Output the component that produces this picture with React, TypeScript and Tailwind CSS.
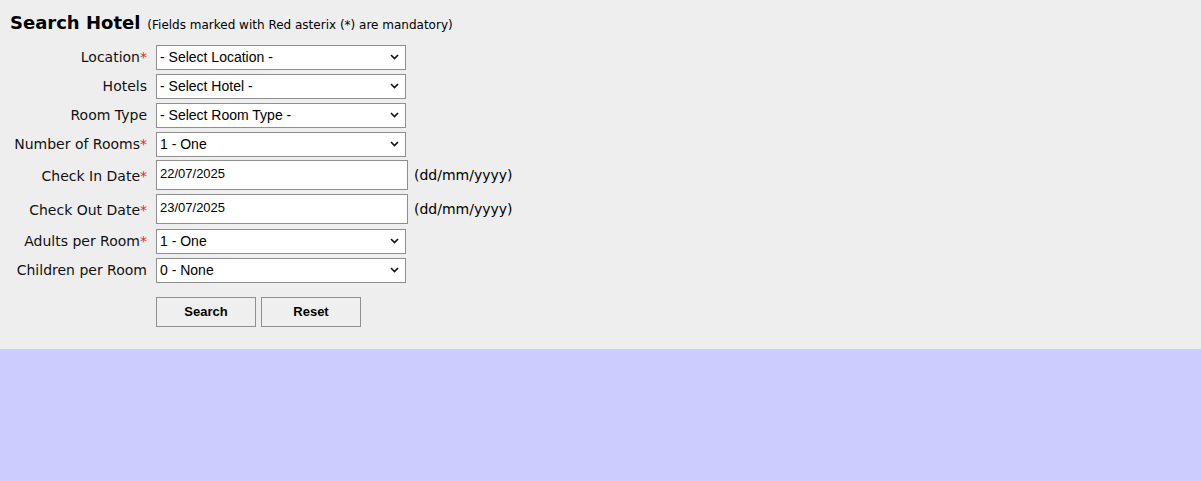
import React from "react";

const labelFont = { fontFamily: '"DejaVu Sans", Verdana, sans-serif' };

function Chevron() {
  return (
    <svg
      className="pointer-events-none absolute right-[7px] top-1/2 -translate-y-1/2"
      width="9"
      height="6"
      viewBox="0 0 9 6"
    >
      <path d="M1 1l3.5 3.5L8 1" fill="none" stroke="#111" strokeWidth="1.6" />
    </svg>
  );
}

function Select({ value }: { value: string }) {
  return (
    <div className="relative w-[250px]">
      <select
        defaultValue={value}
        className="h-[25px] w-full appearance-none border border-[#8f8f8f] bg-white pl-[3px] text-[14px] text-black outline-none font-['Liberation_Sans',Arial,sans-serif]"
      >
        <option>{value}</option>
      </select>
      <Chevron />
    </div>
  );
}

function DateInput({ value }: { value: string }) {
  return (
    <div className="flex items-center gap-[6px]">
      <input
        defaultValue={value}
        className="h-[30px] w-[252px] border border-[#8f8f8f] bg-white px-[3px] pb-[3px] text-[13px] text-black outline-none font-['Liberation_Sans',Arial,sans-serif]"
      />
      <span className="text-[14px] text-black" style={labelFont}>
        (dd/mm/yyyy)
      </span>
    </div>
  );
}

function Row({
  label,
  req,
  children,
  h,
}: {
  label: string;
  req?: boolean;
  children: React.ReactNode;
  h: string;
}) {
  return (
    <div className={`flex items-center ${h}`}>
      <div
        className="w-[150px] pr-[3px] pt-[2px] text-right text-[14px] text-[#111]"
        style={labelFont}
      >
        {label}
        {req && <span className="text-[#e8261d]">*</span>}
      </div>
      <div className="pl-[6px]">{children}</div>
    </div>
  );
}

export default function App() {
  return (
    <div className="flex h-[481px] w-full flex-col">
      <div className="h-[349px] bg-[#eeeeee] pl-[10px] pt-[9px]">
        <div className="flex items-baseline gap-[7px]" style={labelFont}>
          <h1 className="text-[18px] font-bold text-black">Search Hotel</h1>
          <span className="text-[12px] text-black">
            (Fields marked with Red asterix (*) are mandatory)
          </span>
        </div>
        <div className="-ml-[10px] mt-[8px] flex flex-col gap-[4px]">
          <Row label="Location" req h="h-[25px]">
            <Select value="- Select Location -" />
          </Row>
          <Row label="Hotels" h="h-[25px]">
            <Select value="- Select Hotel -" />
          </Row>
          <Row label="Room Type" h="h-[25px]">
            <Select value="- Select Room Type -" />
          </Row>
          <Row label="Number of Rooms" req h="h-[25px]">
            <Select value="1 - One" />
          </Row>
          <Row label="Check In Date" req h="h-[30px]">
            <DateInput value="22/07/2025" />
          </Row>
          <Row label="Check Out Date" req h="h-[30px]">
            <DateInput value="23/07/2025" />
          </Row>
          <Row label="Adults per Room" req h="h-[25px]">
            <Select value="1 - One" />
          </Row>
          <Row label="Children per Room" h="h-[25px]">
            <Select value="0 - None" />
          </Row>
          <div className="mt-[11px] flex gap-[5px] pl-[156px]">
            <button className="h-[30px] w-[100px] border border-[#8f8f8f] bg-[#efefef] text-[13px] font-bold text-black font-['Liberation_Sans',Arial,sans-serif]">
              Search
            </button>
            <button className="h-[30px] w-[100px] border border-[#8f8f8f] bg-[#efefef] text-[13px] font-bold text-black font-['Liberation_Sans',Arial,sans-serif]">
              Reset
            </button>
          </div>
        </div>
      </div>
      <div className="flex-1 bg-[#ccccff]" />
    </div>
  );
}
